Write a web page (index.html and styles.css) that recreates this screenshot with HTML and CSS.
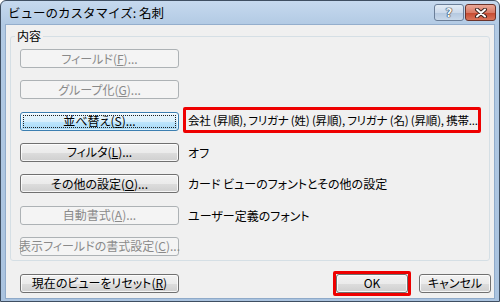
FILE: index.html
```html
<!DOCTYPE html>
<html lang="ja">
<head>
<meta charset="utf-8">
<title>ビューのカスタマイズ: 名刺</title>
<link rel="stylesheet" href="styles.css">
</head>
<body>
<div class="window">
  <div class="titlebar">
    <span class="title">ビューのカスタマイズ: 名刺</span>
    <div class="caption-buttons">
      <span class="cap-btn help">?</span>
      <span class="cap-btn close">
        <svg width="14" height="10" viewBox="0 0 14 10"><path d="M3 1.5 L11 8.5 M11 1.5 L3 8.5" stroke="#3b2420" stroke-width="4" stroke-linecap="round"/><path d="M3 1.5 L11 8.5 M11 1.5 L3 8.5" stroke="#ffffff" stroke-width="2" stroke-linecap="round"/></svg>
      </span>
    </div>
  </div>
  <div class="client">
    <fieldset class="group">
      <legend class="legend">内容</legend>
      <div class="rows">
        <div class="row"><span class="btn disabled">フィールド(<u>F</u>)...</span></div>
        <div class="row"><span class="btn disabled">グループ化(<u>G</u>)...</span></div>
        <div class="row"><span class="btn focused"><span class="focus">並べ替え(<u>S</u>)...</span></span><span class="desc marked">会社 (昇順), フリガナ (姓) (昇順), フリガナ (名) (昇順), 携帯...</span></div>
        <div class="row"><span class="btn">フィルタ(<u>L</u>)...</span><span class="desc">オフ</span></div>
        <div class="row"><span class="btn">その他の設定(<u>O</u>)...</span><span class="desc">カード ビューのフォントとその他の設定</span></div>
        <div class="row"><span class="btn disabled">自動書式(<u>A</u>)...</span><span class="desc">ユーザー定義のフォント</span></div>
        <div class="row"><span class="btn disabled">表示フィールドの書式設定(<u>C</u>)...</span></div>
      </div>
    </fieldset>
    <div class="footer">
      <span class="btn reset">現在のビューをリセット(<u>R</u>)</span>
      <div class="footer-right">
        <span class="ok-mark"><span class="btn small">OK</span></span>
        <span class="btn small">キャンセル</span>
      </div>
    </div>
  </div>
</div>
</body>
</html>
```

FILE: styles.css
```css
html, body {
  margin: 0;
  padding: 0;
  background: #ffffff;
}
body {
  font-family: "Noto Sans CJK JP", "Noto Sans", sans-serif;
  font-size: 12px;
  color: #000;
}
.window {
  width: 500px;
  height: 302px;
  box-sizing: border-box;
  border: 1px solid #3f4f62;
  border-radius: 6px 6px 0 0;
  background: linear-gradient(#c6d9ee 0, #b2cae4 24px, #aac3df 100%);
  display: flex;
  flex-direction: column;
  overflow: hidden;
}
.titlebar {
  height: 24px;
  flex: none;
  display: flex;
  align-items: center;
  justify-content: space-between;
  padding: 0 3px 0 7px;
}
.title {
  font-size: 12.5px;
  line-height: 14px;
  color: #000;
  margin-top: -1px;
}
.caption-buttons {
  align-self: flex-start;
  margin-top: 3px;
  display: flex;
  gap: 1px;
}
.cap-btn {
  height: 17px;
  box-sizing: border-box;
  border-radius: 3px;
  display: flex;
  align-items: center;
  justify-content: center;
}
.help {
  width: 30px;
  border: 1px solid #6a7e98;
  background: linear-gradient(#e3ecf6 0, #ccdaeb 50%, #b3c7df 51%, #c8d8ea 100%);
  color: #f5f7fa;
  font-family: "DejaVu Sans", sans-serif;
  font-weight: bold;
  font-size: 12px;
  line-height: 12px;
  text-shadow: 0 0 1px #1f2a38, 0 0 1px #1f2a38, 0 0 1px #1f2a38;
}
.close {
  width: 31px;
  border: 1px solid #6b332a;
  background: linear-gradient(#eaa898 0, #d97b66 50%, #c4482f 51%, #d9745a 100%);
}
.client {
  flex: 1;
  margin: 0 5px 3px 5px;
  background: #f0f0f0;
  box-shadow: 0 0 0 1px rgba(110, 140, 175, 0.45);
  display: flex;
  flex-direction: column;
}
.group {
  margin: 4px 4px 0 4px;
  padding: 6px 9px 4px 9px;
  border: 1px solid #d5dfe5;
  border-radius: 3px;
  min-width: 0;
}
.legend {
  padding: 0 2px;
  margin-left: -5px;
  line-height: 14px;
  font-size: 12px;
}
.rows {
  display: flex;
  flex-direction: column;
  gap: 12.33px;
}
.row {
  display: flex;
  height: 19px;
  align-items: stretch;
}
.btn {
  width: 159px;
  height: 19px;
  box-sizing: border-box;
  flex: none;
  border: 1px solid #707070;
  border-radius: 3px;
  background: linear-gradient(#f2f2f2 0, #ebebeb 50%, #dddddd 51%, #cfcfcf 100%);
  box-shadow: inset 0 0 0 1px rgba(255, 255, 255, 0.8);
  display: flex;
  align-items: center;
  justify-content: center;
  font-size: 12px;
  line-height: 14px;
  font-feature-settings: "palt";
  color: #000;
  white-space: nowrap;
}
.btn u {
  text-underline-offset: 1px;
}
.btn.disabled {
  border-color: #adb2b5;
  background: #f4f4f4;
  box-shadow: none;
  color: #8a8a8a;
}
.btn.focused {
  border-color: #3c7fb1;
  background: linear-gradient(#eaf6fd 0, #d9f0fc 50%, #bee6fd 51%, #a7d9f5 100%);
  box-shadow: inset 0 0 0 1px rgba(255, 255, 255, 0.6);
  padding: 2px;
}
.focus {
  flex: 1;
  align-self: stretch;
  display: flex;
  align-items: center;
  justify-content: center;
  outline: 1px dotted #202020;
  outline-offset: -1px;
}
.desc {
  padding-left: 9px;
  display: flex;
  align-items: center;
  font-size: 12px;
  font-feature-settings: "palt";
  white-space: nowrap;
}
.desc.marked {
  margin: -5px 0 -2px 4px;
  padding-left: 2px;
  width: 306px;
  box-sizing: border-box;
  border: 3px solid #ee0000;
  border-radius: 2px;
  font-size: 11.5px;
  letter-spacing: -0.2px;
}
.footer {
  margin-top: 13px;
  padding: 0 3px 0 14px;
  display: flex;
  justify-content: space-between;
  align-items: flex-start;
}
.footer-right {
  display: flex;
  gap: 8px;
  align-items: center;
}
.btn.small {
  width: 72px;
}
.ok-mark {
  display: flex;
  margin: -3px 0;
  border: 3px solid #ee0000;
  border-radius: 2px;
}
```
